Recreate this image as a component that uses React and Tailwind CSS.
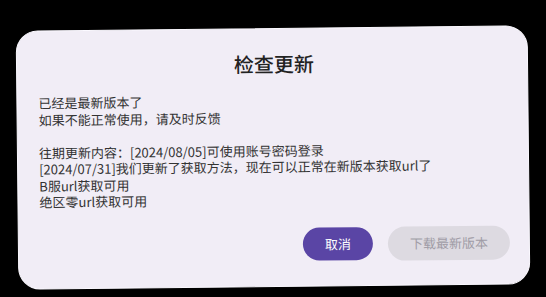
export default function App() {
  const font = { fontFamily: '"Noto Sans CJK SC", "Noto Sans", sans-serif' };
  return (
    <div className="w-[546px] h-[297px] bg-black overflow-hidden flex flex-col" style={font}>
      <div className="ml-[17px] mt-[28px] w-[512px] h-[259px] rotate-[-0.6deg] rounded-[22px] bg-[#f1edf6] border border-[#fbf9ff] flex flex-col pl-[21px] pr-[19px]">
        <div className="mt-[21px] text-center text-[20px] leading-[28px] text-[#222] font-medium pl-[2px]">检查更新</div>
        <div className="mt-[15px] text-[13px] leading-[16.5px] text-[#333]">
          <div>已经是最新版本了</div>
          <div>如果不能正常使用，请及时反馈</div>
          <div className="h-[16.5px]"></div>
          <div>往期更新内容：[2024/08/05]可使用账号密码登录</div>
          <div>[2024/07/31]我们更新了获取方法，现在可以正常在新版本获取url了</div>
          <div>B服url获取可用</div>
          <div>绝区零url获取可用</div>
        </div>
        <div className="mt-[19px] flex justify-end items-center gap-[15px]">
          <div className="w-[70px] h-[33px] rounded-full bg-[#5a45a5] text-white text-[13px] flex items-center justify-center">取消</div>
          <div className="w-[122px] h-[34px] rounded-full bg-[#dddae1] text-[#a09ca6] text-[13px] flex items-center justify-center">下载最新版本</div>
        </div>
      </div>
    </div>
  );
}
